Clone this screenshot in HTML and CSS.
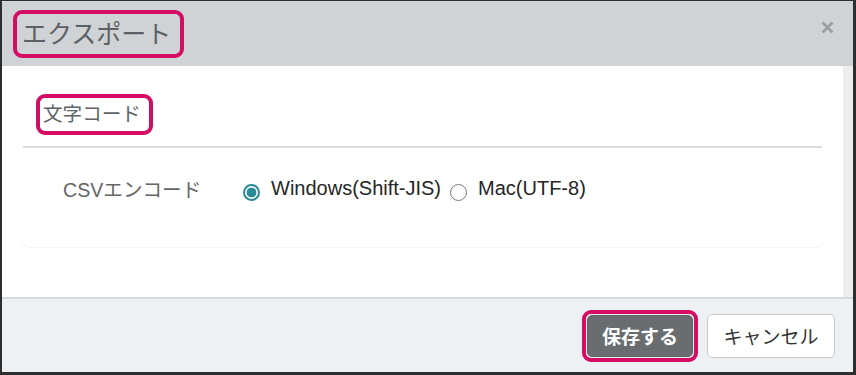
FILE: index.html
```html
<!DOCTYPE html>
<html lang="ja">
<head>
<meta charset="utf-8">
<title>エクスポート</title>
<link rel="stylesheet" href="styles.css">
</head>
<body>
<div class="frame">
  <header class="head">
    <span class="hl title">エクスポート</span>
    <button class="close" aria-label="閉じる">
      <svg width="13" height="13" viewBox="0 0 13 13"><path d="M1.5 1.5L11.5 11.5M11.5 1.5L1.5 11.5" stroke="#9b9d9f" stroke-width="2.6" stroke-linecap="butt"/></svg>
    </button>
  </header>
  <div class="body">
    <div class="content">
      <div class="section-row"><span class="hl section">文字コード</span></div>
      <div class="card">
        <div class="row">
          <span class="label">CSVエンコード</span>
          <label class="opt"><input type="radio" name="enc" class="radio" checked><span>Windows(Shift-JIS)</span></label>
          <label class="opt"><input type="radio" name="enc" class="radio"><span>Mac(UTF-8)</span></label>
        </div>
      </div>
    </div>
    <div class="track"></div>
  </div>
  <footer class="foot">
    <span class="hl btn-hl"><button class="btn save">保存する</button></span>
    <button class="btn cancel">キャンセル</button>
  </footer>
</div>
</body>
</html>
```
FILE: styles.css
```css
* { box-sizing: border-box; }
html, body { margin: 0; padding: 0; background: #fff; }
body { font-family: "Liberation Sans", "Noto Sans CJK JP", sans-serif; }

.frame {
  width: 856px;
  height: 375px;
  border-style: solid;
  border-color: #2e2e2e;
  border-width: 1px 3px 3px 2px;
  display: flex;
  flex-direction: column;
  background: #fff;
}

.hl {
  border: 4px solid #d40c63;
  border-radius: 9px;
  display: inline-block;
}

.head {
  height: 65px;
  flex: none;
  background: #d0d3d6;
  display: flex;
  align-items: center;
  padding-left: 11px;
  padding-right: 19px;
  border-top-left-radius: 3px;
}
.title {
  font-size: 25px;
  line-height: 40px;
  color: #5b6064;
  padding: 0 9px 0 5px;
}
.close {
  margin-left: auto;
  border: 0;
  background: none;
  padding: 0;
  width: 13px;
  height: 13px;
  display: flex;
  margin-top: -12px;
}

.body {
  flex: 1;
  display: flex;
  min-height: 0;
}
.content {
  flex: 1;
  padding: 28px 21px 0 21px;
}
.track {
  width: 10px;
  background: #ededed;
}
.section-row { padding-left: 13px; }
.section {
  font-size: 19.6px;
  line-height: 33px;
  color: #5f6366;
  padding: 0 8px 0 3px;
}
.card {
  margin-top: 11px;
  border-top: 2px solid #dcdcdc;
  height: 101px;
  border-radius: 0 0 7px 7px;
  box-shadow: 0 1px 2px rgba(0,0,0,0.06);
  padding: 29px 0 0 40px;
}
.row {
  display: flex;
  align-items: center;
  height: 24px;
  font-size: 19.6px;
}
.label {
  width: 180px;
  color: #666;
  position: relative;
  top: -1px;
}
.opt {
  display: flex;
  align-items: center;
  gap: 11px;
  color: #262626;
  margin-right: 9px;
  font-size: 20px;
}
.opt span { position: relative; top: -1px; }
.radio {
  appearance: none;
  -webkit-appearance: none;
  margin: 0;
  width: 17px;
  height: 17px;
  border-radius: 50%;
  border: 1.5px solid #7a7a7a;
  background: #fff;
  position: relative;
  top: 3px;
}
.radio:checked {
  border: 2px solid #2a8a96;
  background: radial-gradient(circle, #2a8a96 0 4.6px, #fff 5.2px);
}

.foot {
  height: 75px;
  flex: none;
  background: #eef1f4;
  border-top: 2px solid #d7dadd;
  display: flex;
  align-items: center;
  justify-content: flex-end;
  padding-right: 18px;
  gap: 9px;
}
.btn-hl {
  padding: 1px;
  display: flex;
}
.btn {
  font-family: "Liberation Sans", "Noto Sans CJK JP", sans-serif;
  font-size: 19px;
  border-radius: 5px;
  cursor: pointer;
}
.save {
  width: 106px;
  height: 42px;
  background: #6a6d70;
  border: 1px solid #5e6164;
  color: #fff;
  font-weight: bold;
  padding: 0;
}
.cancel {
  width: 128px;
  height: 44px;
  background: #fff;
  border: 1px solid #c9c9c9;
  color: #333;
  padding: 0;
}
```
